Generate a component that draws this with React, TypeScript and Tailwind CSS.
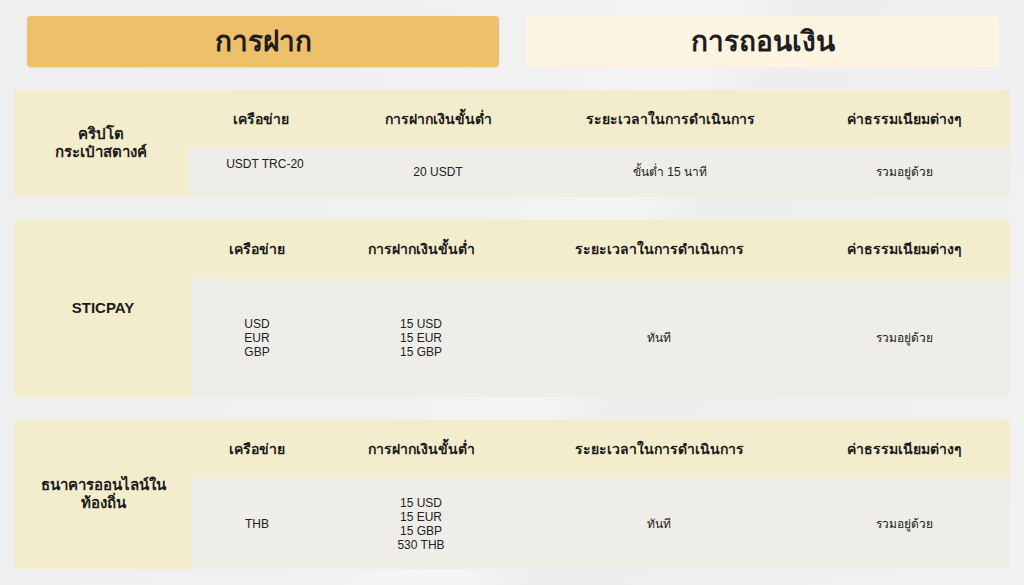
import React from "react";

type Row = {
  label: string[];
  network: string[];
  min: string[];
  time: string;
  fee: string;
};

const headers = ["เครือข่าย", "การฝากเงินขั้นต่ำ", "ระยะเวลาในการดำเนินการ", "ค่าธรรมเนียมต่างๆ"];

function Table({
  row,
  cols,
  rows,
  netTop,
}: {
  row: Row;
  cols: string;
  rows: string;
  netTop?: boolean;
}) {
  return (
    <div className={`grid ${cols} ${rows}`}>
      <div className="row-span-2 bg-[#f3edcd] flex flex-col items-center justify-center text-[15px] leading-[18px] font-bold text-[#1c1c1c] pb-[2px]">
        {row.label.map((l) => (
          <div key={l}>{l}</div>
        ))}
      </div>
      {headers.map((h) => (
        <div
          key={h}
          className="bg-[#f3edcd] flex items-center justify-center text-[14px] font-bold text-[#1c1c1c] pt-[1px]"
        >
          {h}
        </div>
      ))}
      <div
        className={`bg-[#eeede8] flex flex-col items-center text-[12px] leading-[14px] text-[#222] ${
          netTop ? "justify-start pt-[10px] pl-[8px]" : "justify-center"
        }`}
      >
        {row.network.map((n) => (
          <div key={n}>{n}</div>
        ))}
      </div>
      <div className="bg-[#eeede8] flex flex-col items-center justify-center text-[12px] leading-[14px] text-[#222]">
        {row.min.map((n) => (
          <div key={n}>{n}</div>
        ))}
      </div>
      <div className="bg-[#eeede8] flex items-center justify-center text-[12px] text-[#222]">{row.time}</div>
      <div className="bg-[#eeede8] flex items-center justify-center text-[12px] text-[#222]">{row.fee}</div>
    </div>
  );
}

export default function App() {
  return (
    <div
      className="w-[1024px] h-[585px] overflow-hidden bg-[linear-gradient(115deg,#efeff0_0%,#f1f1f1_45%,#f5f5f5_55%,#eeeeef_62%,#f2f2f2_100%)] px-[14px] pt-[16px] flex flex-col"
      style={{ fontFamily: '"Liberation Sans", Arial, "Noto Sans", sans-serif' }}
    >
      <div className="flex gap-[27px] px-[13px] w-[999px]">
        <div className="w-[472px] h-[51px] rounded-[4px] bg-[#eec06b] flex items-center justify-center text-[28px] font-semibold text-[#1e1e1e] shadow-[0_1px_2px_rgba(0,0,0,0.08)]">
          การฝาก
        </div>
        <div className="w-[473px] h-[51px] rounded-[2px] bg-[#fdf4e1] flex items-center justify-center text-[28px] font-semibold text-[#1e1e1e]">
          การถอนเงิน
        </div>
      </div>
      <div className="mt-[23px] w-[996px] flex flex-col gap-[23px]">
        <Table
          row={{
            label: ["คริปโต", "กระเป๋าสตางค์"],
            network: ["USDT TRC-20"],
            min: ["20 USDT"],
            time: "ขั้นต่ำ 15 นาที",
            fee: "รวมอยู่ด้วย",
          }}
          cols="grid-cols-[174px_146px_208px_256px_1fr]"
          rows="grid-rows-[57px_50px]"
          netTop
        />
        <Table
          row={{
            label: ["STICPAY"],
            network: ["USD", "EUR", "GBP"],
            min: ["15 USD", "15 EUR", "15 GBP"],
            time: "ทันที",
            fee: "รวมอยู่ด้วย",
          }}
          cols="grid-cols-[178px_130px_198px_278px_1fr]"
          rows="grid-rows-[58px_119px]"
        />
        <Table
          row={{
            label: ["ธนาคารออนไลน์ใน", "ท้องถิ่น"],
            network: ["THB"],
            min: ["15 USD", "15 EUR", "15 GBP", "530 THB"],
            time: "ทันที",
            fee: "รวมอยู่ด้วย",
          }}
          cols="grid-cols-[178px_130px_198px_278px_1fr]"
          rows="grid-rows-[58px_91px]"
        />
      </div>
    </div>
  );
}
